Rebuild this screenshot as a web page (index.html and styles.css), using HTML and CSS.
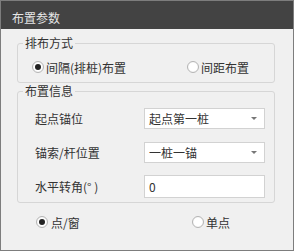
FILE: index.html
```html
<!DOCTYPE html>
<html lang="zh">
<head>
<meta charset="utf-8">
<link rel="stylesheet" href="styles.css">
</head>
<body>
<div class="window">
  <div class="titlebar">布置参数</div>
  <div class="content">
    <fieldset class="group g1">
      <legend>排布方式</legend>
      <div class="radio-row inner1">
        <label class="opt opt-a"><span class="radio checked"></span><span>间隔(排桩)布置</span></label>
        <label class="opt"><span class="radio"></span><span>间距布置</span></label>
      </div>
    </fieldset>
    <fieldset class="group g2">
      <legend>布置信息</legend>
      <div class="form">
        <div class="row r1">
          <span class="lbl">起点锚位</span>
          <div class="select"><span>起点第一桩</span><span class="arrow"></span></div>
        </div>
        <div class="row r2">
          <span class="lbl">锚索/杆位置</span>
          <div class="select"><span>一桩一锚</span><span class="arrow"></span></div>
        </div>
        <div class="row r3">
          <span class="lbl">水平转角(°&nbsp;)</span>
          <div class="input">0</div>
        </div>
      </div>
    </fieldset>
    <div class="radio-row bottom">
      <label class="opt opt-b"><span class="radio checked"></span><span>点/窗</span></label>
      <label class="opt"><span class="radio"></span><span>单点</span></label>
    </div>
  </div>
</div>
</body>
</html>
```

FILE: styles.css
```css
* { box-sizing: border-box; }
html, body { margin: 0; padding: 0; }
body {
  width: 294px;
  height: 251px;
  font-family: "Noto Sans CJK SC", "Microsoft YaHei", sans-serif;
  font-size: 12px;
  color: #333;
  background: #f0f0f0;
}
.window {
  width: 294px;
  height: 251px;
  border: 1px solid #7d7d7d;
  background: #f0f0f0;
  display: flex;
  flex-direction: column;
}
.titlebar {
  height: 28px;
  background: #434343;
  color: #e6e6e6;
  padding-left: 11px;
  line-height: 33px;
  font-size: 12px;
}
.content {
  padding: 7px 18px 0 16px;
  display: flex;
  flex-direction: column;
}
.group {
  margin: 0;
  padding: 0;
  border: 1px solid #d6d6d6;
  border-radius: 3px;
  min-width: 0;
}
.group legend {
  margin-left: 5px;
  padding: 0 2px;
  line-height: 14px;
  font-size: 12px;
}
.inner1 { margin: 7px 0 5px 14px; }
.g2 { margin-top: 1px; }
.form { margin: 10px 0 4px 17px; }
.radio-row {
  display: flex;
  align-items: center;
  height: 20px;
}
.opt {
  display: flex;
  align-items: center;
  gap: 2px;
}
.opt-a { width: 155px; }
.radio {
  width: 12px;
  height: 12px;
  border-radius: 50%;
  border: 1px solid #b4b4b4;
  background: #fff;
  display: flex;
  align-items: center;
  justify-content: center;
  box-shadow: inset 0 0 1px rgba(0,0,0,0.15);
}
.radio.checked::after {
  content: "";
  width: 6px;
  height: 6px;
  border-radius: 50%;
  background: #222;
}
.form {
  display: flex;
  flex-direction: column;
}
.row {
  display: flex;
  align-items: center;
}
.r1, .r2 { height: 21px; }
.r2 { margin-top: 13px; }
.r3 { height: 23px; margin-top: 12px; }
.lbl { width: 109px; white-space: pre; }
.select, .input {
  width: 121px;
  height: 100%;
  background: #fff;
  border: 1px solid #d2d2d2;
  display: flex;
  align-items: center;
  padding-left: 4px;
}
.select { justify-content: space-between; padding-right: 7px; }
.arrow {
  width: 0;
  height: 0;
  border-left: 3px solid transparent;
  border-right: 3px solid transparent;
  border-top: 3px solid #777;
}
.bottom {
  margin-top: 9px;
  padding-left: 19px;
}
.opt-b { width: 156px; gap: 3px; }
```
